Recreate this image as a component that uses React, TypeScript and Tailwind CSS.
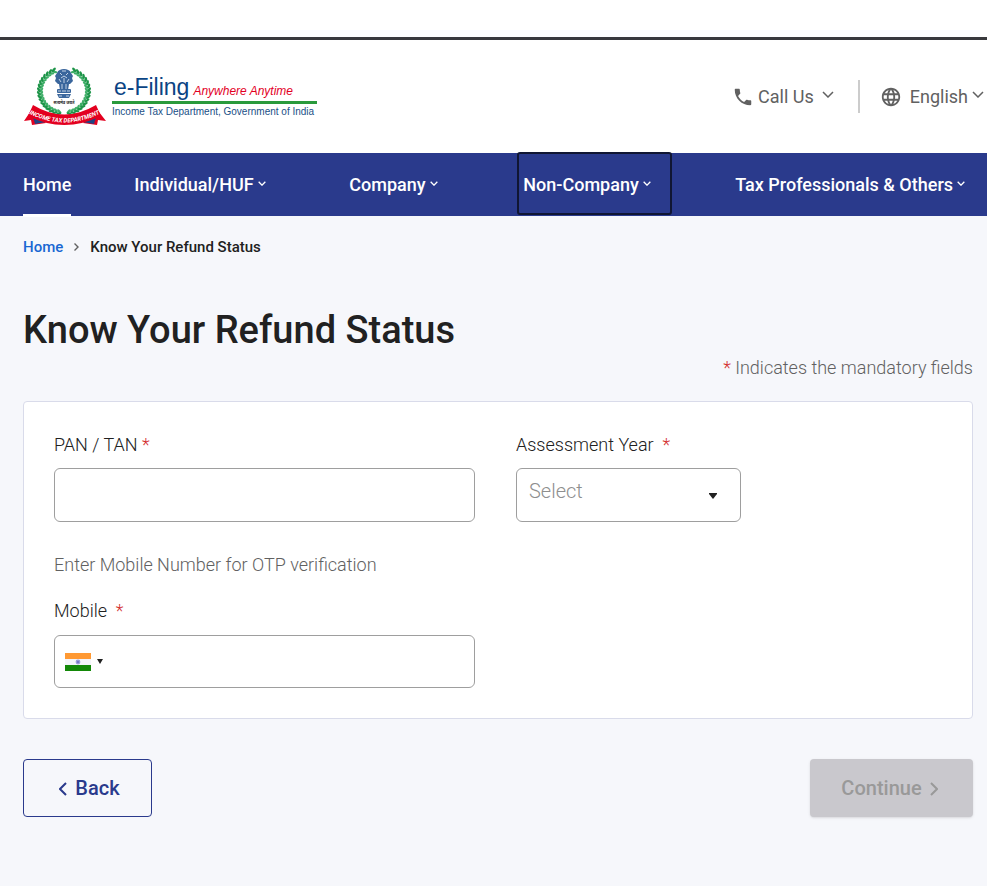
import { useState } from 'react';
import { MdPhone, MdLanguage } from 'react-icons/md';

const navItems = [
  { label: 'Individual/HUF', width: 'w-[152px]' },
  { label: 'Company', width: 'w-[105px]' },
  { label: 'Non-Company', width: 'w-[155px]', focused: true },
  { label: 'Tax Professionals & Others', width: 'w-[240px]' },
];

const years = ['2024-25', '2023-24', '2022-23', '2021-22'];

// Angles of the leaf pairs along one side of the wreath
const leafAngles = [-68, -59, -50, -41, -32, -23, -14, -5, 4, 13, 22, 31, 40, 49, 58, 67, 76];

function Chevron({ className, stroke = 2, d = 'M1 1l5 5 5-5', box = '0 0 12 7' }: { className: string; stroke?: number; d?: string; box?: string }) {
  return (
    <svg viewBox={box} className={className} fill="none" stroke="currentColor" strokeWidth={stroke} aria-hidden="true">
      <path d={d} />
    </svg>
  );
}

function WreathSide() {
  return (
    <g>
      {leafAngles.map((a) => (
        <g key={a} transform={`rotate(${a}) translate(24 0)`}>
          <ellipse cx="-1.5" cy="0" rx="1.3" ry="2.8" fill="#3fae68" transform="rotate(-32)" />
          <ellipse cx="1.5" cy="0" rx="1.3" ry="2.8" fill="#1d9448" transform="rotate(32)" />
        </g>
      ))}
    </g>
  );
}

function Emblem() {
  return (
    <svg viewBox="0 0 82 59" className="h-[59px] w-[82px] shrink-0" role="img" aria-label="Income Tax Department emblem">
      <g transform="translate(40 24) scale(1 0.92)">
        <WreathSide />
        <g transform="scale(-1 1)">
          <WreathSide />
        </g>
      </g>
      {/* lion capital */}
      <g fill="#3a669c">
        <path d="M33 6c1-3 4-4 7-4s6 1 7 4l2 3-1 2 1 3-3 3H34l-3-3 1-3-1-2z" />
        <path d="M35 17h10l-1 6h-8z" />
        <rect x="33" y="22" width="14" height="4" rx="1" />
        <path d="M33 27h14l-2 4H35z" />
      </g>
      <g fill="none" stroke="#e6eef7" strokeWidth="0.8">
        <path d="M36 6l2 2M44 6l-2 2M38 4h4M37 11l3-2 3 2M40 11v5M35 12l2 3M45 12l-2 3M38 17v5M42 17v5M34 24h3M38 24h4M43 24h3M35 29h3M42 29h3" />
      </g>
      <text x="40" y="37" textAnchor="middle" fontSize="4" className="fill-[#222] font-['Noto_Sans',sans-serif] font-bold">सत्यमेव जयते</text>
      {/* ribbon */}
      <path d="M6 45L0 54l7-1 1 5 14-2-5-6z" fill="#e3001f" />
      <path d="M75 45l7 9-8-1-1 5-14-2 5-6z" fill="#e3001f" />
      <path d="M9 50l2 7 11-2-4-4zM72 50l-2 7-11-2 4-4z" fill="#1f4484" />
      <path d="M9 38Q40 57 72 38l5 11Q40 67 4 49z" fill="#e3001f" />
      <path id="ribbon-line" d="M6 47Q40 64 75 47" fill="none" />
      <text fontSize="6" className="fill-white font-[Roboto,sans-serif] font-bold italic">
        <textPath href="#ribbon-line" startOffset="50%" textAnchor="middle">INCOME TAX DEPARTMENT</textPath>
      </text>
    </svg>
  );
}

function Header() {
  return (
    <header className="flex h-[113px] items-center bg-white pr-[3px] pl-6">
      <a href="#home" className="flex items-center gap-1.5">
        <Emblem />
        <span className="block font-['Liberation_Sans',sans-serif]">
          <span className="flex items-baseline gap-1 border-b-[3px] border-[#2a9a3c] pr-6 pl-0.5 leading-7">
            <span className="text-[23px] text-[#0a4484]">e-Filing</span>
            <span className="text-xs text-[#e3001f] italic">Anywhere Anytime</span>
          </span>
          <span className="block text-[10px] leading-4 text-[#1a4f86]">Income Tax Department, Government of India</span>
        </span>
      </a>
      <div className="ml-auto flex items-center text-lg text-[#616161]">
        <button type="button" className="flex items-center">
          <MdPhone className="mr-1 size-[22px]" />
          Call Us
          <Chevron className="mb-1 ml-2 h-[7px] w-3" stroke={1.5} />
        </button>
        <span className="mr-5 ml-6 h-[33px] w-0.5 bg-[#cccccc]" />
        <button type="button" className="flex items-center">
          <MdLanguage className="mr-2 size-[22px]" />
          English
          <Chevron className="mb-1 ml-1 h-[7px] w-3" stroke={1.5} />
        </button>
      </div>
    </header>
  );
}

function NavBar() {
  return (
    <nav className="flex h-[63px] gap-[63px] bg-[#2a3a8c] pl-[23px] text-lg font-medium text-white">
      <a href="#home" className="relative flex items-center">
        Home
        <span className="absolute top-[61px] left-0 h-[3px] w-full bg-white" />
      </a>
      {navItems.map((item) => (
        <button
          key={item.label}
          type="button"
          className={`flex shrink-0 items-center whitespace-nowrap ${item.width} ${item.focused ? '-mt-px mb-px rounded-[3px] border-2 border-[#101633] pt-0.5 pl-1' : ''}`}
        >
          {item.label}
          <Chevron className="mb-0.5 ml-1 h-[5px] w-2" stroke={2} />
        </button>
      ))}
    </nav>
  );
}

function Star() {
  return <span className="text-[#d32f2f]">*</span>;
}

function RefundForm() {
  const [pan, setPan] = useState('');
  const [year, setYear] = useState('');
  const [mobile, setMobile] = useState('');

  return (
    <form onSubmit={(e) => e.preventDefault()}>
      <div className="rounded border border-[#d9dbea] bg-white px-[30px] pt-[31px] pb-[30px] text-lg leading-6 font-light text-[#212121]">
        <div className="flex gap-[41px]">
          <div className="w-[421px]">
            <label htmlFor="pan" className="block">PAN / TAN <Star /></label>
            <input id="pan" value={pan} onChange={(e) => setPan(e.target.value)} className="mt-[11px] block h-[54px] w-full rounded-md border border-[#9e9e9e] px-3" />
          </div>
          <div className="w-[225px]">
            <label htmlFor="year" className="block">Assessment Year&nbsp; <Star /></label>
            <div className="relative mt-[11px]">
              <select
                id="year"
                value={year}
                onChange={(e) => setYear(e.target.value)}
                className="block h-[54px] w-full appearance-none rounded-md border border-[#9e9e9e] bg-white px-3 pb-2 text-xl text-[#8e8e8e]"
              >
                <option value="">Select</option>
                {years.map((y) => <option key={y}>{y}</option>)}
              </select>
              <svg viewBox="0 0 8 6" className="pointer-events-none absolute top-[25px] right-6 h-1.5 w-2" aria-hidden="true">
                <path d="M0 1V0h8v1L4 6z" fill="#212121" />
              </svg>
            </div>
          </div>
        </div>

        <p className="mt-[31px] text-[#616161]">Enter Mobile Number for OTP verification</p>
        <label htmlFor="mobile" className="mt-[22px] block">Mobile&nbsp; <Star /></label>
        <div className="mt-3 flex h-[53px] w-[421px] items-center rounded-md border border-[#9e9e9e] pl-2.5">
          <button type="button" aria-label="Country code" className="flex items-center gap-1.5">
            <svg viewBox="0 0 26 18" className="h-[18px] w-[26px]" aria-hidden="true">
              <rect width="26" height="18" fill="#f4f4fa" />
              <rect width="26" height="6" fill="#ff9933" />
              <rect y="12" width="26" height="6" fill="#138808" />
              <circle cx="13" cy="9" r="2.4" fill="#9b9bd8" />
              <circle cx="13" cy="9" r="1" fill="#6c6cc4" />
            </svg>
            <svg viewBox="0 0 6 5" className="h-[5px] w-1.5" aria-hidden="true">
              <path d="M0 0h6L3 5z" fill="#212121" />
            </svg>
          </button>
          <input id="mobile" type="tel" value={mobile} onChange={(e) => setMobile(e.target.value)} className="h-full min-w-0 flex-1 px-3 outline-none" />
        </div>
      </div>

      <div className="mt-10 flex justify-between text-xl font-medium">
        <button type="button" className="flex h-[58px] w-[129px] items-center justify-center gap-2 rounded border border-[#2a3a8c] pl-1 text-[#2a3a8c]">
          <Chevron className="mt-0.5 h-3.5 w-2" box="0 0 8 14" d="M7 1L1 7l6 6" stroke={2} />
          Back
        </button>
        <button type="submit" disabled className="flex h-[58px] w-[163px] items-center justify-center gap-2 rounded bg-[#c9c8cd] pr-1 text-[#999999] shadow">
          Continue
          <Chevron className="mt-0.5 h-3.5 w-2" box="0 0 8 14" d="M1 1l6 6-6 6" stroke={2} />
        </button>
      </div>
    </form>
  );
}

export default function App() {
  return (
    <div className="min-h-screen bg-[#f6f7fb] font-[Roboto,sans-serif]">
      <div className="h-10 border-b-[3px] border-[#3a3a3d] bg-white" />
      <Header />
      <NavBar />
      <main className="pt-5 pr-3.5 pl-[23px]">
        <nav className="flex items-center text-[15px] leading-[22px] font-medium" aria-label="Breadcrumb">
          <a href="#home" className="text-[#1967d2]">Home</a>
          <Chevron className="mx-[11px] h-2 w-[5px] text-[#616161]" box="0 0 5 8" d="M0.5 0.5L4 4 0.5 7.5" stroke={1.4} />
          <span className="text-[#212121]">Know Your Refund Status</span>
        </nav>
        <h1 className="mt-12 text-[38px] leading-[48px] font-medium text-[#212121]">Know Your Refund Status</h1>
        <p className="mt-0.5 mb-[21px] text-right text-lg leading-6 font-light text-[#616161]"><Star /> Indicates the mandatory fields</p>
        <RefundForm />
      </main>
    </div>
  );
}
